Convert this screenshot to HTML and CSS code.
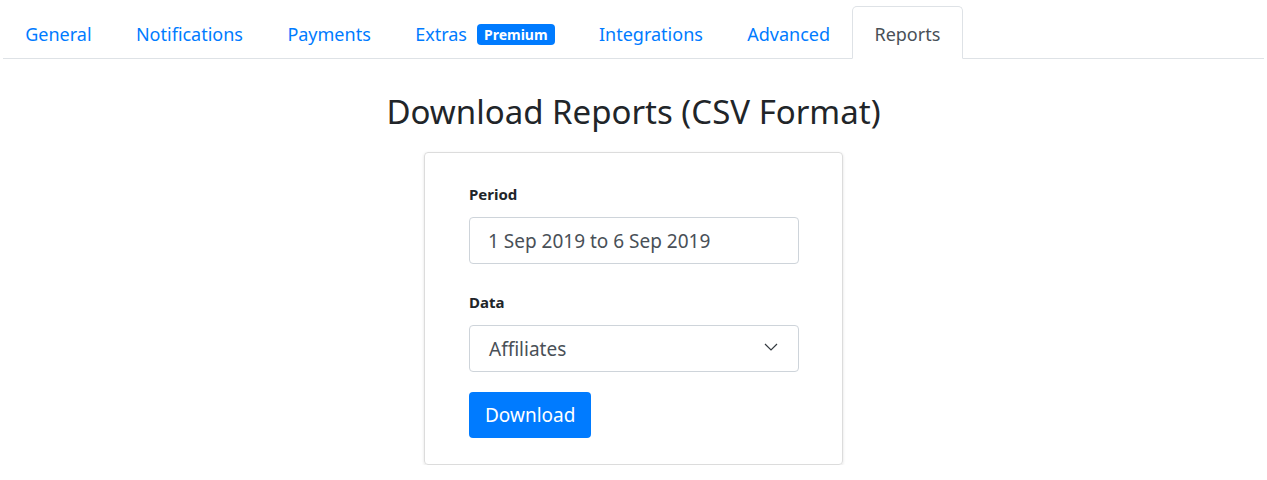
FILE: index.html
```html
<!DOCTYPE html>
<html lang="en">
<head>
<meta charset="utf-8">
<title>Reports</title>
<link rel="stylesheet" href="styles.css">
</head>
<body>
<div class="page">
  <ul class="tabs">
    <li><a class="tab" href="#">General</a></li>
    <li><a class="tab" href="#">Notifications</a></li>
    <li><a class="tab" href="#">Payments</a></li>
    <li><a class="tab" href="#">Extras <span class="badge">Premium</span></a></li>
    <li><a class="tab" href="#">Integrations</a></li>
    <li><a class="tab" href="#">Advanced</a></li>
    <li><a class="tab active" href="#">Reports</a></li>
  </ul>
  <h1 class="title">Download Reports (CSV Format)</h1>
  <div class="card">
    <div class="field">
      <label class="label">Period</label>
      <div class="input">1 Sep 2019 to 6 Sep 2019</div>
    </div>
    <div class="field">
      <label class="label">Data</label>
      <div class="select">
        <span>Affiliates</span>
        <svg class="chev" width="14" height="8" viewBox="0 0 14 8"><path d="M1 1l6 6 6-6" fill="none" stroke="#343a40" stroke-width="1.2"/></svg>
      </div>
    </div>
    <button class="btn">Download</button>
  </div>
</div>
</body>
</html>
```
FILE: styles.css
```css
* { box-sizing: border-box; }
html, body { margin: 0; padding: 0; background: #fff; }
body { font-family: "Noto Sans", "Open Sans", sans-serif; color: #212529; }
.page { padding: 0 3px; }
.tabs {
  list-style: none; margin: 0; padding: 6px 0 0 0;
  display: flex; border-bottom: 1px solid #dee2e6;
}
.tabs li { margin-bottom: -1px; }
.tab {
  display: flex; align-items: center; height: 53px;
  padding: 2px 21.2px 0; font-size: 18px; color: #007bff; text-decoration: none;
  border: 1px solid transparent; border-radius: 5px 5px 0 0;
}
.tab.active { color: #495057; border-color: #dee2e6 #dee2e6 #fff; background: #fff; }
.badge {
  display: inline-block; margin-left: 10px; background: #007bff; color: #fff;
  font-size: 14px; font-weight: 700; padding: 2px 7px; border-radius: 4px;
  line-height: 17px; margin-top: 2px;
}
.title {
  margin: 30px 0 0; text-align: center; font-weight: 400; font-size: 33px;
  line-height: 46px;
}
.card {
  width: 419px; margin: 17px auto 0; border: 1px solid #dcdcdc; border-radius: 4px;
  box-shadow: 0 1px 3px rgba(0,0,0,0.12);
  padding: 30px 44px 26px;
}
.field { margin-bottom: 27px; }
.field + .field { margin-bottom: 20px; }
.label { display: block; font-size: 15px; font-weight: 700; margin-bottom: 12px; line-height: 22px; }
.input, .select {
  width: 330px; height: 47px; border: 1px solid #ced4da; border-radius: 4px;
  display: flex; align-items: center; padding: 0 18px; font-size: 19px; color: #495057;
}
.select { justify-content: space-between; padding: 0 20px 0 19px; }
.chev { margin-top: -4px; }
.btn {
  font-family: inherit; background: #007bff; color: #fff; border: 0; border-radius: 4px;
  font-size: 19px; height: 46px; padding: 0 16px; width: 122px;
}
```
